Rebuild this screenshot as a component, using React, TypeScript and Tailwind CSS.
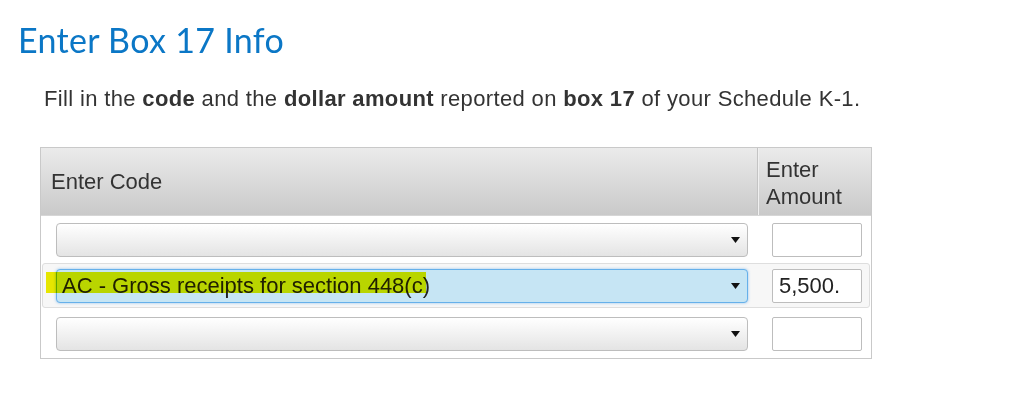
import { ChangeEvent, useState } from "react";

function Caret() {
  return (
    <svg width="9" height="6" viewBox="0 0 9 6" className="absolute right-[7px] top-1/2 -translate-y-1/2">
      <path d="M0 0 H9 L4.5 6 Z" fill="#111" />
    </svg>
  );
}

function CodeSelect({ value, active }: { value: string; active?: boolean }) {
  return (
    <div
      className={
        active
          ? "relative w-[692px] h-[34px] rounded-[4px] border border-[#66b0ea] bg-[#c6e5f4] shadow-[0_0_3px_rgba(80,160,230,0.6)] flex items-center pl-[5px]"
          : "relative w-[692px] h-[34px] rounded-[4px] border border-[#bdbdbd] bg-gradient-to-b from-white to-[#e4e4e4] flex items-center pl-[5px]"
      }
    >
      <span className="text-[22px] text-[#222] leading-none">{value}</span>
      <Caret />
    </div>
  );
}

function AmountInput({ value }: { value: string }) {
  const [v, setV] = useState(value);
  return (
    <input
      value={v}
      onChange={(e: ChangeEvent<HTMLInputElement>) => setV(e.target.value)}
      className="w-[90px] h-[34px] border border-[#bdbdbd] rounded-[2px] bg-white px-[6px] text-[22px] text-[#222] outline-none"
    />
  );
}

export default function App() {
  return (
    <div className="w-[1021px] h-[411px] bg-white font-['Liberation_Sans',Arial,sans-serif] text-[#333]">
      {/* Heading */}
      <h1 className="pl-[18px] pt-[20px] text-[34px] leading-[40px] text-[#0b77c6] font-['Lato','Noto_Sans',sans-serif] tracking-[0.3px]">
        Enter Box 17 Info
      </h1>

      <p className="pl-[44px] pt-[26px] text-[22px] leading-[26px] text-[#333] tracking-[0.35px]">
        Fill in the <b>code</b> and the <b>dollar amount</b> reported on <b>box 17</b> of your Schedule K-1.
      </p>

      {/* Table */}
      <div className="ml-[40px] mt-[35px] w-[832px] border border-[#c9c9c9]">
        <div className="flex h-[68px] bg-gradient-to-b from-[#ebebeb] to-[#c9c9c9] border-b border-[#d6d6d6]">
          <div className="flex-1 flex items-center pl-[10px] text-[22px] border-r border-[#c4c4c4]">Enter Code</div>
          <div className="w-[113px] pl-[7px] pt-[8px] text-[22px] leading-[27px] border-l border-[#f0f0f0]">
            Enter
            <br />
            Amount
          </div>
        </div>

        <div className="flex items-center h-[47px] pl-[15px]">
          <CodeSelect value="" />
          <div className="ml-[24px]">
            <AmountInput value="" />
          </div>
        </div>

        <div className="relative flex items-center h-[45px] mx-[1px] pl-[13px] border border-[#dedede] rounded-[3px] bg-[#f7f7f7]">
          <CodeSelect value="AC - Gross receipts for section 448(c)" active />
          <div className="ml-[24px]">
            <AmountInput value="5,500." />
          </div>
          <div className="absolute left-[3px] top-[8px] w-[380px] h-[21px] bg-[#eeee00] mix-blend-multiply pointer-events-none" />
        </div>

        <div className="flex items-center h-[50px] pl-[15px] pt-[1px]">
          <CodeSelect value="" />
          <div className="ml-[24px]">
            <AmountInput value="" />
          </div>
        </div>
      </div>
    </div>
  );
}
